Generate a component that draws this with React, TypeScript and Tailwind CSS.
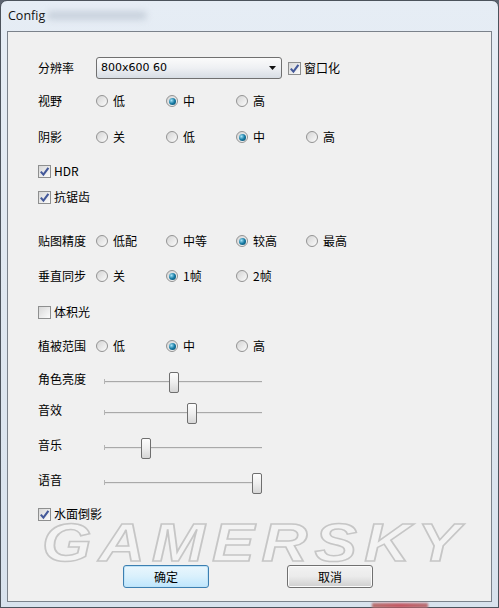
import React from 'react'

const cjk = '"Noto Sans CJK SC", "Noto Sans", sans-serif'

function Radio({ checked }: { checked?: boolean }) {
  return (
    <span className="flex h-[12px] w-[12px] shrink-0 items-center justify-center rounded-full border border-[#939393] bg-gradient-to-br from-[#d4d4d4] to-[#fbfbfb]">
      {checked && (
        <span className="h-[7px] w-[7px] rounded-full bg-[radial-gradient(circle_at_35%_35%,#a6e4f8,#167aa3_50%,#08405c)]" />
      )}
    </span>
  )
}

function Check({ checked }: { checked?: boolean }) {
  return (
    <span className="flex h-[13px] w-[13px] shrink-0 items-center justify-center border border-[#8e8f8f] bg-gradient-to-br from-[#d8d8d8] to-[#fcfcfc]">
      {checked && (
        <svg viewBox="0 0 11 11" className="h-[11px] w-[11px]">
          <path d="M1.8 5.6 L4.4 8.6 L9.4 1.8" stroke="#44599a" strokeWidth="2.1" fill="none" />
        </svg>
      )}
    </span>
  )
}

function Label({ text, w = 'w-[58px]' }: { text: string; w?: string }) {
  return <span className={`${w} shrink-0 text-[12px] leading-[14px]`}>{text}</span>
}

function RadioGroup({ options, value }: { options: string[]; value: number }) {
  return (
    <div className="flex">
      {options.map((o, i) => (
        <label key={o} className="flex w-[70px] items-center gap-[5px] text-[12px] leading-[14px]">
          <Radio checked={i === value} />
          <span>{o}</span>
        </label>
      ))}
    </div>
  )
}

function RadioRow({ label, options, value, mt }: { label: string; options: string[]; value: number; mt: string }) {
  return (
    <div className={`flex h-[20px] items-center ${mt}`}>
      <Label text={label} />
      <RadioGroup options={options} value={value} />
    </div>
  )
}

function CheckRow({ label, checked, mt }: { label: string; checked?: boolean; mt: string }) {
  return (
    <div className={`relative z-10 flex h-[20px] items-center gap-[3px] ${mt}`}>
      <Check checked={checked} />
      <span className="text-[12px] leading-[14px]">{label}</span>
    </div>
  )
}

function SliderRow({ label, value, mt }: { label: string; value: number; mt: string }) {
  return (
    <div className={`flex h-[21px] items-start ${mt}`}>
      <Label text={label} />
      <div className="relative h-[21px] w-[174px]">
        <div className="absolute left-[8px] top-[9px] h-[2px] w-[158px] border-t border-[#a9a9a9] bg-[#e4e4e4]" />
        <div className="absolute left-[8px] top-[7px] h-[5px] w-px bg-[#b5b5b5]" />
        <div
          className="absolute top-0 h-[21px] w-[10px] rounded-[2px] border border-[#6f6f6f] bg-gradient-to-b from-[#fdfdfd] via-[#eeeeee] to-[#d6d6d6]"
          style={{ left: 8 + (value / 100) * 148 }}
        />
      </div>
    </div>
  )
}

export default function App() {
  return (
    <div className="relative h-[608px] w-[499px] overflow-hidden bg-[#5d6470]" style={{ fontFamily: cjk, color: '#000' }}>
      <div className="flex h-full flex-col rounded-t-[7px] border border-[#4c535c] bg-gradient-to-b from-[#e6edf5] via-[#dfe7f0] to-[#d8e2ed] px-[6px] pb-[5px]">
        {/* title bar */}
        <div className="relative flex h-[30px] items-center pl-[1px] pt-[1px]">
          <span className="text-[12.5px] text-[#111]" style={{ fontFamily: '"Open Sans", "Noto Sans", sans-serif' }}>
            Config
          </span>
          <span className="absolute left-[40px] top-[10px] h-[9px] w-[100px] rounded-full bg-[#c9d2dd] blur-[3px]" />
        </div>

        {/* client area */}
        <div className="relative flex-1 border border-[#7b828b] bg-[#f0f0f0] pl-[30px]">
          <div className="mt-[25px] flex h-[22px] items-center">
            <Label text="分辨率" />
            <div className="flex h-[22px] w-[186px] items-center justify-between rounded-[3px] border border-[#707070] bg-gradient-to-b from-[#fbfbfb] via-[#eef0f3] to-[#d7dde4] pl-[4px] pr-[5px]">
              <span className="text-[11px]" style={{ fontFamily: '"DejaVu Sans", sans-serif' }}>800x600 60</span>
              <svg viewBox="0 0 7 4" className="h-[4px] w-[7px]">
                <path d="M0 0 H7 L3.5 4 Z" fill="#111" />
              </svg>
            </div>
            <div className="ml-[6px] flex items-center gap-[3px]">
              <Check checked />
              <span className="text-[12px] leading-[14px]">窗口化</span>
            </div>
          </div>

          <RadioRow label="视野" options={['低', '中', '高']} value={1} mt="mt-[12px]" />
          <RadioRow label="阴影" options={['关', '低', '中', '高']} value={2} mt="mt-[16px]" />

          <CheckRow label="HDR" checked mt="mt-[14px]" />
          <CheckRow label="抗锯齿" checked mt="mt-[6px]" />

          <RadioRow label="贴图精度" options={['低配', '中等', '较高', '最高']} value={2} mt="mt-[24px]" />
          <RadioRow label="垂直同步" options={['关', '1帧', '2帧']} value={1} mt="mt-[15px]" />

          <CheckRow label="体积光" mt="mt-[16px]" />

          <RadioRow label="植被范围" options={['低', '中', '高']} value={1} mt="mt-[14px]" />

          <SliderRow label="角色亮度" value={44} mt="mt-[16px]" />
          <SliderRow label="音效" value={56} mt="mt-[10px]" />
          <SliderRow label="音乐" value={25} mt="mt-[14px]" />
          <SliderRow label="语音" value={100} mt="mt-[14px]" />

          <CheckRow label="水面倒影" checked mt="mt-[10px]" />

          <div className="pointer-events-none absolute left-[34px] top-[490px] origin-left scale-x-[1.18] text-[54px] font-bold italic leading-[40px] tracking-[6px] text-[#f3f3f3] [-webkit-text-stroke:1.5px_#c6c6c6]" style={{ fontFamily: '"Liberation Sans", sans-serif' }}>
            GAMERSKY
          </div>

          <div className="relative mt-[41px] flex gap-[78px] pl-[85px]">
            <button className="flex h-[23px] w-[86px] items-center justify-center rounded-[3px] border border-[#3c7fb1] bg-gradient-to-b from-[#eaf6fd] via-[#d9f0fc] to-[#bee6fd] text-[12px] shadow-[inset_0_0_0_1px_#bfe3f7]">
              确定
            </button>
            <button className="flex h-[23px] w-[86px] items-center justify-center rounded-[3px] border border-[#707070] bg-gradient-to-b from-[#f2f2f2] via-[#ebebeb] to-[#cfcfcf] text-[12px] shadow-[inset_0_0_0_1px_#fbfbfb]">
              取消
            </button>
          </div>
        </div>
      </div>
      <span className="absolute bottom-0 left-[372px] h-[5px] w-[56px] bg-gradient-to-r from-[#b7706f] via-[#c45864] to-[#b86d72] blur-[1px]" />
    </div>
  )
}
